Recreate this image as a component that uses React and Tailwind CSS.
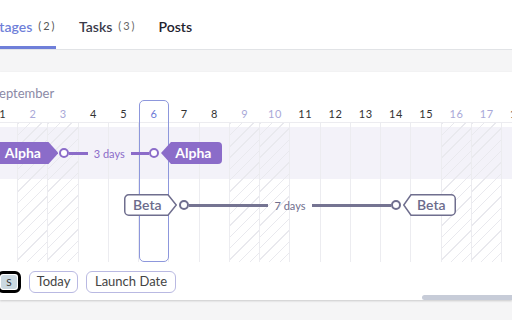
import React from "react";

const PURPLE = "#8b6cc9";
const SLATE = "#6f6e8e";

const days = [
  { n: 1 }, { n: 2, off: true }, { n: 3, off: true }, { n: 4 }, { n: 5 }, { n: 6, today: true },
  { n: 7 }, { n: 8 }, { n: 9, off: true }, { n: 10, off: true }, { n: 11 }, { n: 12 },
  { n: 13 }, { n: 14 }, { n: 15 }, { n: 16, off: true }, { n: 17, off: true }, { n: 18 },
];

const tagPath = (w, h, a, r, s, side) =>
  side === "right"
    ? `M ${r + s} ${s} H ${w - a} L ${w - s} ${h / 2} L ${w - a} ${h - s} H ${r + s} A ${r} ${r} 0 0 1 ${s} ${h - s - r} V ${s + r} A ${r} ${r} 0 0 1 ${r + s} ${s} Z`
    : `M ${a} ${s} H ${w - s - r} A ${r} ${r} 0 0 1 ${w - s} ${s + r} V ${h - s - r} A ${r} ${r} 0 0 1 ${w - s - r} ${h - s} H ${a} L ${s} ${h / 2} Z`;

const Tag = ({ label, width, arrow, side, filled, className = "", textClass = "" }) => (
  <div className={`relative h-[22px] shrink-0 flex items-center ${className}`} style={{ width }}>
    <svg className="absolute inset-0" width={width} height={22} viewBox={`0 0 ${width} 22`}>
      <path
        d={tagPath(width, 22, arrow, 4, filled ? 0 : 0.75, side)}
        fill={filled ? PURPLE : "#fff"}
        stroke={filled ? "none" : SLATE}
        strokeWidth={1.5}
      />
    </svg>
    <span className={`relative text-[14px] leading-none ${textClass}`}>{label}</span>
  </div>
);

const Dot = ({ color, className = "" }) => (
  <svg width="10" height="10" viewBox="0 0 10 10" className={`shrink-0 ${className}`}>
    <circle cx="5" cy="5" r="4" fill="#fff" stroke={color} strokeWidth="2" />
  </svg>
);

const Span = ({ width, label, color, textClass }) => (
  <div className="flex items-center shrink-0" style={{ width }}>
    <div className="flex-1 h-[3px]" style={{ background: color }} />
    <span className={`px-[6px] text-[11px] leading-none ${textClass}`}>{label}</span>
    <div className="flex-1 h-[3px]" style={{ background: color }} />
  </div>
);

export default function App() {
  return (
    <div className="w-[512px] h-[320px] overflow-hidden bg-[#f5f5f6] font-['Lato',sans-serif]">
      <div className="h-[50px] bg-white border-b border-[#e1e3e6] flex items-end">
        <div className="ml-[-8px] w-[64px] h-[49px] border-b-[3px] border-[#6f7fd9] flex items-center pt-[6px]">
          <span className="text-[14px] font-semibold text-[#6f7fd9]">Stages</span>
          <span className="ml-[6px] text-[11px] tracking-[0.18em] text-[#555]">(2)</span>
        </div>
        <div className="ml-[23px] h-[49px] flex items-center pt-[3px]">
          <span className="text-[14px] font-semibold text-[#3a3a4a]">Tasks</span>
          <span className="ml-[6px] text-[11px] tracking-[0.18em] text-[#666]">(3)</span>
        </div>
        <div className="ml-[22px] h-[49px] flex items-center pt-[3px]">
          <span className="text-[14px] font-semibold text-[#22222e]">Posts</span>
        </div>
      </div>

      <div className="mt-[22px] h-[228px] bg-white shadow-[0_1px_2px_rgba(0,0,0,0.18)] flex flex-col">
        <div className="pt-[14px] h-[28px] ml-[-8px] text-[13px] leading-[14px] text-[#8b89a6]">September</div>

        <div className="ml-[-12.25px] grid grid-cols-[repeat(18,30.25px)] grid-rows-[22px_5px_52px_83px]">
          {days.map((d, i) => (
            <div
              key={`h${d.n}`}
              className={`row-start-1 text-center pt-[8px] text-[11px] leading-none tracking-[0.06em] ${
                d.today ? "text-[#6c7ad6]" : d.off ? "text-[#a9a8d8]" : "text-[#333]"
              }`}
              style={{ gridColumnStart: i + 1 }}
            >
              {d.n}
            </div>
          ))}

          <div className="row-start-3 col-start-1 col-span-full bg-[#f3f2f9]" />

          {days.map((d, i) => (
            <div
              key={`c${d.n}`}
              className={`row-start-2 row-span-3 border-r border-t border-[#ececf0] ${
                d.off
                  ? "bg-[repeating-linear-gradient(135deg,#e9e9ee_0px,#e9e9ee_1px,transparent_1px,transparent_8px)]"
                  : ""
              }`}
              style={{ gridColumnStart: i + 1 }}
            />
          ))}

          <div className="row-start-1 row-span-4 col-start-6 border border-[#8d97dc] rounded-[5px]" />

          <div className="row-start-3 col-start-1 col-span-full flex items-center">
            <Tag label="Alpha" width={70.5} arrow={10} side="right" filled className="pl-[17px]" textClass="font-bold text-white" />
            <Dot color={PURPLE} className="ml-[1px]" />
            <Span width={80} label="3 days" color={PURPLE} textClass="text-[#8b6cc9]" />
            <Dot color={PURPLE} />
            <Tag label="Alpha" width={61} arrow={10} side="left" filled className="ml-[2px] pl-[14px]" textClass="font-bold text-white" />
          </div>

          <div className="row-start-4 col-start-1 col-span-full flex items-start pt-[15px]">
            <Tag label="Beta" width={53} arrow={9} side="right" className="ml-[136.25px] pl-[9px]" textClass="font-semibold text-[#6c6b8c]" />
            <Dot color={SLATE} className="ml-[2px] mt-[6px]" />
            <div className="mt-[6px]">
              <Span width={202} label="7 days" color="#757492" textClass="text-[#6f6e8e]" />
            </div>
            <Dot color={SLATE} className="mt-[6px]" />
            <Tag label="Beta" width={53} arrow={8} side="left" className="ml-[2px] pl-[14px]" textClass="font-semibold text-[#6c6b8c]" />
          </div>
        </div>

        <div className="mt-[9px] h-[22px] flex items-center">
          <div className="ml-[-3px] w-[24px] h-[22px] border-[3px] border-black rounded-[6px] bg-white p-[1px] flex">
            <div className="flex-1 rounded-[3px] bg-[#cbd9e1] flex items-center justify-center text-[10px] text-[#333]">S</div>
          </div>
          <div className="ml-[8px] w-[49px] h-[22px] border border-[#b9b9e2] rounded-[6px] flex items-center justify-center text-[13px] text-[#444]">
            Today
          </div>
          <div className="ml-[8px] w-[90px] h-[22px] border border-[#b9b9e2] rounded-[6px] flex items-center justify-center text-[13px] text-[#444]">
            Launch Date
          </div>
        </div>

        <div className="mt-auto ml-[422px] w-[110px] h-[5px] rounded-full bg-[#c7ccd8]" />
      </div>
    </div>
  );
}
